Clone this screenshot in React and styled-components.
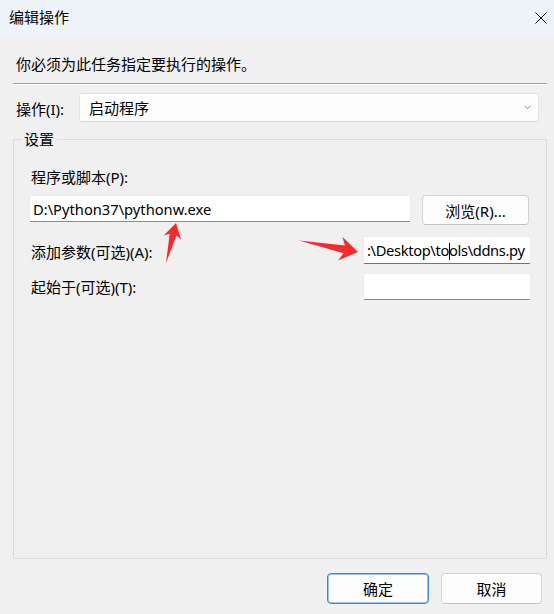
import React from "react";
import styled, { createGlobalStyle } from "styled-components";

const Global = createGlobalStyle`
  html, body { margin: 0; padding: 0; background: #f0f0f0; }
  * { box-sizing: border-box; }
`;

const FONT = `"Segoe UI", "Noto Sans", "Noto Sans CJK SC", sans-serif`;

const Window = styled.div`
  position: relative;
  width: 554px;
  height: 614px;
  background: #f0f0f0;
  font-family: ${FONT};
  font-size: 15px;
  color: #000;
  overflow: hidden;
`;

const TitleBar = styled.div`
  height: 36px;
  background: #eef3f8;
  display: flex;
  align-items: center;
  justify-content: space-between;
  padding: 0 7px 0 9px;
  font-size: 15px;
`;

const TitleText = styled.span`
  line-height: 20px;
  margin-top: -2px;
`;

const CloseIcon = styled.svg`
  width: 12px;
  height: 12px;
`;

const Content = styled.div`
  padding: 0 7px 0 13px;
`;

const Instruction = styled.div`
  height: 47px;
  padding: 7px 0 0 3px;
  display: flex;
  align-items: center;
`;

const Separator = styled.div`
  height: 2px;
  border-top: 1px solid #a0a0a0;
  border-bottom: 1px solid #ffffff;
`;

const OpRow = styled.div`
  margin-top: 8px;
  display: flex;
  align-items: center;
  padding-left: 3px;
  padding-right: 8px;
`;

const OpLabel = styled.span`
  width: 63px;
  line-height: 20px;
  margin-top: 2px;
`;

const Combo = styled.div`
  flex: 1;
  height: 29px;
  background: #fdfdfd;
  border: 1px solid #e3e3e3;
  border-bottom-color: #d6d6d6;
  border-radius: 3px;
  display: flex;
  align-items: center;
  justify-content: space-between;
  padding: 0 7px 0 9px;
`;

const Chevron = styled.svg`
  width: 7px;
  height: 5px;
`;

const Group = styled.fieldset`
  margin: 7px 0 0 0;
  height: 430px;
  border: 1px solid #dcdcdc;
  border-radius: 0;
  padding: 0 15px 0 15px;
`;

const Legend = styled.legend`
  padding: 0 3px 0 2px;
  margin-left: -7px;
  line-height: 20px;
`;

const FieldLabel = styled.div`
  padding-left: 2px;
  line-height: 20px;
  margin-top: ${(p) => p.$top || 0}px;
`;

const ProgramRow = styled.div`
  margin-top: 8px;
  display: flex;
  align-items: flex-start;
`;

const Field = styled.div`
  height: ${(p) => p.$h || 27}px;
  flex: 1;
  background: #ffffff;
  border: 1px solid #ececec;
  border-bottom: 1px solid ${(p) => (p.$focus ? "#3b7fcc" : "#8c8c8c")};
  border-radius: 2px;
  display: flex;
  align-items: center;
  padding: 0 2px 0 3px;
  overflow: hidden;
  font-size: 14.7px;
  letter-spacing: ${(p) => (p.$tight ? "-0.35px" : "0")};
`;

const FieldText = styled.span`
  white-space: nowrap;
  line-height: 20px;
`;

const Caret = styled.span`
  display: inline-block;
  width: 1px;
  height: 17px;
  background: #000;
  margin: 0 -1px 0 0;
  vertical-align: -4px;
`;

const Button = styled.button`
  font-family: ${FONT};
  font-size: 15px;
  color: #000;
  width: ${(p) => p.$w}px;
  height: ${(p) => p.$h}px;
  background: #fdfdfd;
  border: 1px solid ${(p) => (p.$primary ? "#3d85d6" : "#d3d3d3")};
  border-bottom-color: ${(p) => (p.$primary ? "#3d85d6" : "#c2c2c2")};
  box-shadow: ${(p) => (p.$primary ? "inset 0 0 0 1px #9cc3ee" : "none")};
  border-radius: 4px;
  padding: 0;
  display: flex;
  align-items: center;
  justify-content: center;
`;

const BrowseButton = styled(Button)`
  margin-left: 11px;
  margin-right: 2px;
`;

const ParamGrid = styled.div`
  margin-top: 11px;
  display: grid;
  grid-template-columns: 1fr 168px;
  row-gap: 9px;
  align-items: center;
`;

const Footer = styled.div`
  margin-top: 14px;
  display: flex;
  justify-content: flex-end;
  gap: 12px;
  padding-right: 5px;
`;

const Overlay = styled.svg`
  position: absolute;
  left: 0;
  top: 0;
  width: 554px;
  height: 614px;
  pointer-events: none;
`;

export default function App() {
  return (
    <>
      <Global />
      <Window>
        <TitleBar>
          <TitleText>编辑操作</TitleText>
          <CloseIcon viewBox="0 0 12 12">
            <path d="M0.5 0.5 L11.5 11.5 M11.5 0.5 L0.5 11.5" stroke="#000" strokeWidth="1" fill="none" />
          </CloseIcon>
        </TitleBar>
        <Content>
          <Instruction>你必须为此任务指定要执行的操作。</Instruction>
          <Separator />
          <OpRow>
            <OpLabel>操作(I):</OpLabel>
            <Combo>
              <span>启动程序</span>
              <Chevron viewBox="0 0 7 5">
                <path d="M0.5 0.8 L3.5 3.8 L6.5 0.8" stroke="#8a8a8a" strokeWidth="1" fill="none" />
              </Chevron>
            </Combo>
          </OpRow>
          <Group>
            <Legend>设置</Legend>
            <FieldLabel $top={18}>程序或脚本(P):</FieldLabel>
            <ProgramRow>
              <Field $h={27}>
                <FieldText>D:\Python37\pythonw.exe</FieldText>
              </Field>
              <BrowseButton $w={107} $h={30}>浏览(R)...</BrowseButton>
            </ProgramRow>
            <ParamGrid>
              <FieldLabel $top={4}>添加参数(可选)(A):</FieldLabel>
              <Field $h={28} $focus $tight>
                <FieldText>
                  :\Desktop\to<Caret />ols\ddns.py
                </FieldText>
              </Field>
              <FieldLabel>起始于(可选)(T):</FieldLabel>
              <Field $h={27} />
            </ParamGrid>
          </Group>
          <Footer>
            <Button $w={102} $h={31} $primary>确定</Button>
            <Button $w={101} $h={31}>取消</Button>
          </Footer>
        </Content>
        <Overlay viewBox="0 0 554 614">
          <polygon
            points="166,263 176.5,235.4 181.1,239.8 176,223 163.7,235.4 169.7,233.8"
            fill="#f32b2b"
          />
          <polygon
            points="299,240.5 344.9,245.5 342.5,236.9 358,252 338.1,260.5 343.5,253.3"
            fill="#f32b2b"
          />
        </Overlay>
      </Window>
    </>
  );
}
